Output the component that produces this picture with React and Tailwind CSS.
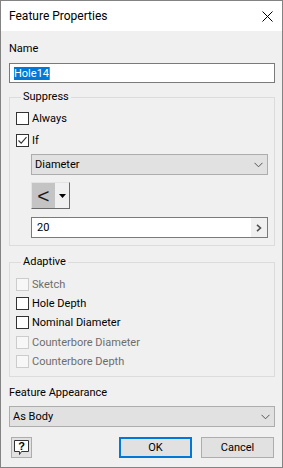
import React from "react";

function Check({ label, checked, disabled, className = "" }) {
  return (
    <div className={`flex items-center h-[13px] ${className}`}>
      <div
        className={
          disabled
            ? "w-[13px] h-[13px] shrink-0 border border-[#cccccc] bg-[#f7f7f7]"
            : "w-[13px] h-[13px] shrink-0 border border-[#333333] bg-white flex items-center justify-center"
        }
      >
        {checked && (
          <svg width="11" height="11" viewBox="0 0 11 11">
            <path d="M1.5 5.5 L4.2 8.2 L9.5 2.2" stroke="#333333" strokeWidth="1.1" fill="none" />
          </svg>
        )}
      </div>
      <span className={disabled ? "ml-[3px] leading-[16px] text-[#6d6d6d]" : "ml-[3px] leading-[16px] text-black"}>
        {label}
      </span>
    </div>
  );
}

function Chevron() {
  return (
    <svg width="9" height="6" viewBox="0 0 9 6" className="shrink-0">
      <path d="M0.5 0.8 L4.5 4.8 L8.5 0.8" stroke="#555555" strokeWidth="1" fill="none" />
    </svg>
  );
}

export default function App() {
  return (
    <div className="w-[283px] h-[468px] flex flex-col border border-[#838383] bg-[#f0f0f0] text-[11px] text-black font-['Roboto',sans-serif] overflow-hidden">
      {/* Title bar */}
      <div className="h-[30px] shrink-0 bg-white flex items-center justify-between pl-[8px] pr-[9px]">
        <span className="leading-[16px] text-[12px]">Feature Properties</span>
        <svg width="11" height="11" viewBox="0 0 11 11">
          <path d="M0.5 0.5 L10.5 10.5 M10.5 0.5 L0.5 10.5" stroke="#000000" strokeWidth="1" fill="none" />
        </svg>
      </div>

      {/* Body */}
      <div className="flex-1 flex flex-col pl-[8px] pr-[7px] pt-[10px]">
        <div className="leading-[16px] h-[16px]">Name</div>
        <div className="mt-[6px] h-[20px] border border-[#7a7a7a] bg-white flex items-center pl-[4px]">
          <span className="bg-[#0078d7] text-white leading-[13px] h-[13px] flex items-center">Hole14</span>
          <span className="w-[1px] h-[13px] bg-[#d97a2a]"></span>
        </div>

        {/* Suppress */}
        <fieldset className="mt-[6px] border border-[#dcdcdc] px-[6px] pb-[7px]">
          <legend className="ml-[5px] px-[2px] leading-[16px]">Suppress</legend>
          <div className="flex flex-col">
            <Check label="Always" className="mt-[7px]" />
            <Check label="If" checked className="mt-[9px]" />
            <div className="mt-[7px] ml-[15px] h-[21px] bg-[#e1e1e1] border border-[#adadad] flex items-center justify-between pl-[3px] pr-[4px]">
              <span className="leading-[16px]">Diameter</span>
              <Chevron />
            </div>
            <div className="mt-[7px] ml-[15px] w-[39px] h-[27px] flex border-t border-l border-t-[#e3e3e3] border-l-[#e3e3e3] border-r border-b border-r-[#696969] border-b-[#696969] bg-[#f0f0f0]">
              <div className="w-[23px] h-full bg-[#c4c4c4] flex items-center justify-center">
                <span className="text-[21px] leading-[20px] text-[#1a1a1a] font-['Liberation_Sans',sans-serif]">&lt;</span>
              </div>
              <div className="flex-1 flex items-center justify-center">
                <svg width="7" height="4" viewBox="0 0 7 4">
                  <path d="M0 0 H7 L3.5 4 Z" fill="#000000" />
                </svg>
              </div>
            </div>
            <div className="mt-[8px] ml-[15px] h-[21px] border border-[#7a7a7a] bg-white flex items-stretch">
              <span className="flex-1 pl-[5px] leading-[19px]">20</span>
              <div className="w-[16px] bg-[#f0f0f0] flex items-center justify-center">
                <svg width="6" height="8" viewBox="0 0 6 8">
                  <path d="M1 0.8 L4.5 4 L1 7.2" stroke="#505050" strokeWidth="1.6" fill="none" />
                </svg>
              </div>
            </div>
          </div>
        </fieldset>

        {/* Adaptive */}
        <fieldset className="mt-[8px] border border-[#dcdcdc] px-[6px] pb-[8px]">
          <legend className="ml-[5px] px-[2px] leading-[16px]">Adaptive</legend>
          <div className="flex flex-col">
            <Check label="Sketch" disabled className="mt-[8px]" />
            <Check label="Hole Depth" className="mt-[6px]" />
            <Check label="Nominal Diameter" className="mt-[6px]" />
            <Check label="Counterbore Diameter" disabled className="mt-[7px]" />
            <Check label="Counterbore Depth" disabled className="mt-[6px]" />
          </div>
        </fieldset>

        <div className="mt-[8px] leading-[16px] h-[16px]">Feature Appearance</div>
        <div className="mt-[5px] h-[21px] bg-[#e1e1e1] border border-[#adadad] flex items-center justify-between pl-[3px] pr-[4px]">
          <span className="leading-[16px]">As Body</span>
          <Chevron />
        </div>

        <div className="mt-[10px] flex items-center justify-between">
          <div className="ml-[2px] w-[21px] h-[21px] border border-[#adadad] bg-[#e1e1e1] flex items-center justify-center">
            <svg width="17" height="17" viewBox="0 0 17 17">
              <path d="M1.5 1.5 H15.5 V12.5 H8.5 L6.5 15.5 L6.5 12.5 H1.5 Z" fill="#ffffff" stroke="#333333" strokeWidth="1" />
              <text x="8.5" y="11" textAnchor="middle" fontSize="11" fontWeight="bold" fontFamily="Liberation Sans, sans-serif" fill="#000000">?</text>
            </svg>
          </div>
          <div className="flex gap-[9px] mr-[1px]">
            <div className="w-[73px] h-[21px] border-2 border-[#0078d7] bg-[#e1e1e1] flex items-center justify-center leading-[16px]">
              OK
            </div>
            <div className="w-[73px] h-[21px] border border-[#adadad] bg-[#e1e1e1] flex items-center justify-center leading-[16px]">
              Cancel
            </div>
          </div>
        </div>
      </div>
    </div>
  );
}
